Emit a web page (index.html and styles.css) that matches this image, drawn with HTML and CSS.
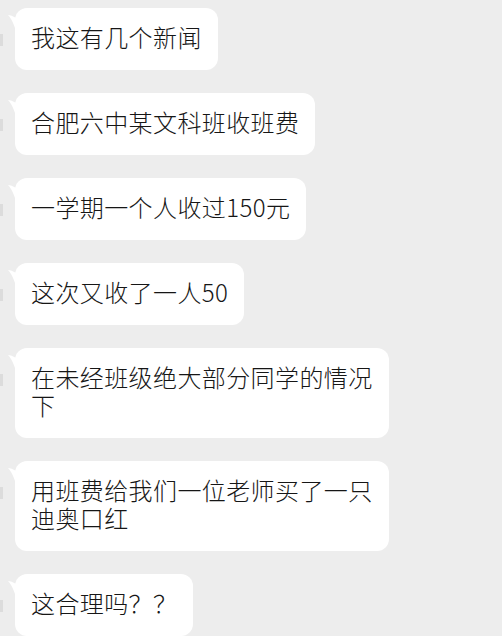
FILE: index.html
```html
<!DOCTYPE html>
<html lang="zh-CN">
<head>
<meta charset="utf-8">
<link rel="stylesheet" href="styles.css">
</head>
<body>
<div class="chat">
  <div class="row"><div class="avatar"></div><div class="bubble"><svg class="tail" width="8" height="18" viewBox="0 0 8 18"><path d="M8 3 C5 1 2 0 0 0 C3 3 6 9 8 16 Z" fill="#fff"/></svg>我这有几个新闻</div></div>
  <div class="row"><div class="avatar"></div><div class="bubble"><svg class="tail" width="8" height="18" viewBox="0 0 8 18"><path d="M8 3 C5 1 2 0 0 0 C3 3 6 9 8 16 Z" fill="#fff"/></svg>合肥六中某文科班收班费</div></div>
  <div class="row"><div class="avatar"></div><div class="bubble"><svg class="tail" width="8" height="18" viewBox="0 0 8 18"><path d="M8 3 C5 1 2 0 0 0 C3 3 6 9 8 16 Z" fill="#fff"/></svg>一学期一个人收过150元</div></div>
  <div class="row"><div class="avatar"></div><div class="bubble"><svg class="tail" width="8" height="18" viewBox="0 0 8 18"><path d="M8 3 C5 1 2 0 0 0 C3 3 6 9 8 16 Z" fill="#fff"/></svg>这次又收了一人50</div></div>
  <div class="row"><div class="avatar"></div><div class="bubble"><svg class="tail" width="8" height="18" viewBox="0 0 8 18"><path d="M8 3 C5 1 2 0 0 0 C3 3 6 9 8 16 Z" fill="#fff"/></svg>在未经班级绝大部分同学的情况下</div></div>
  <div class="row"><div class="avatar"></div><div class="bubble"><svg class="tail" width="8" height="18" viewBox="0 0 8 18"><path d="M8 3 C5 1 2 0 0 0 C3 3 6 9 8 16 Z" fill="#fff"/></svg>用班费给我们一位老师买了一只迪奥口红</div></div>
  <div class="row"><div class="avatar"></div><div class="bubble"><svg class="tail" width="8" height="18" viewBox="0 0 8 18"><path d="M8 3 C5 1 2 0 0 0 C3 3 6 9 8 16 Z" fill="#fff"/></svg>这合理吗？？</div></div>
</div>
</body>
</html>
```
FILE: styles.css
```css
html, body {
  margin: 0;
  padding: 0;
  background: #ededed;
}
body {
  width: 502px;
  height: 636px;
  overflow: hidden;
  font-family: "Noto Sans CJK SC", "Noto Sans", sans-serif;
  font-weight: 300;
  color: #161616;
}
.chat {
  display: flex;
  flex-direction: column;
  gap: 23px;
  padding-top: 8px;
}
.row {
  display: flex;
  align-items: flex-start;
}
.avatar {
  width: 3px;
  height: 12px;
  margin-top: 26px;
  margin-right: 12px;
  background: #dcdcdc;
  flex: none;
}
.bubble {
  position: relative;
  background: #fff;
  border-radius: 12px;
  padding: 15px 16px 19px;
  font-size: 24px;
  line-height: 28px;
  letter-spacing: 0.4px;
  max-width: 342px;
}
.tail {
  position: absolute;
  left: -7px;
  top: 7px;
  display: block;
}
```
